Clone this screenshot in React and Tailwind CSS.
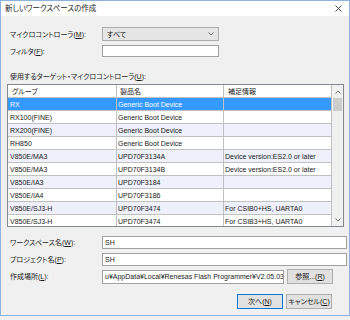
import React from "react";

const rows = [
  ["RX", "Generic Boot Device", ""],
  ["RX100(FINE)", "Generic Boot Device", ""],
  ["RX200(FINE)", "Generic Boot Device", ""],
  ["RH850", "Generic Boot Device", ""],
  ["V850E/MA3", "UPD70F3134A", "Device version:ES2.0 or later"],
  ["V850E/MA3", "UPD70F3134B", "Device version:ES2.0 or later"],
  ["V850E/IA3", "UPD70F3184", ""],
  ["V850E/IA4", "UPD70F3186", ""],
  ["V850E/SJ3-H", "UPD70F3474", "For CSIB0+HS, UARTA0"],
  ["V850E/SJ3-H", "UPD70F3474", "For CSIB3+HS, UARTA0"],
];

// label with underlined access key, e.g. マイクロコントローラ(M):
const Label = ({ text, hotkey, className = "" }) => (
  <span className={`whitespace-nowrap ${className}`}>
    {text}(<span className="underline">{hotkey}</span>):
  </span>
);

const Chevron = ({ up }) => (
  <svg width="6" height="4" viewBox="0 0 6 4">
    <path
      d={up ? "M0.5 3.5 L3 1 L5.5 3.5" : "M0.5 0.5 L3 3 L5.5 0.5"}
      fill="none"
      stroke="#707070"
      strokeWidth="1"
    />
  </svg>
);

const Btn = ({ children, primary }) => (
  <div
    className={`w-[46px] h-[15px] flex items-center justify-center bg-[#e1e1e1] border ${
      primary ? "border-[#0078d7]" : "border-[#adadad]"
    }`}
  >
    {children}
  </div>
);

export default function App() {
  return (
    <div className="w-[350px] h-[320px] bg-[#f0f0f0] font-['Liberation_Sans','Noto_Sans_CJK_JP',sans-serif] text-[7px] leading-none text-[#1a1a1a] [font-feature-settings:'palt']">
      <div className="w-[350px] h-[316px] border border-[#8db2e2] flex flex-col">
        {/* title bar */}
        <div className="h-[15px] bg-white flex items-center justify-between pl-[4px] pr-[7px]">
          <span className="text-[7.5px]">新しいワークスペースの作成</span>
          <svg width="7" height="7" viewBox="0 0 7 7">
            <path d="M0.5 0.5 L6.5 6.5 M6.5 0.5 L0.5 6.5" stroke="#333" strokeWidth="0.9" />
          </svg>
        </div>

        <div className="flex-1 flex flex-col">
          {/* microcontroller select */}
          <div className="mt-[11px] h-[14px] flex items-center pl-[9px]">
            <Label text="マイクロコントローラ" hotkey="M" className="w-[92px]" />
            <div className="w-[117px] h-[14px] bg-[#e5e5e5] border border-[#acacac] flex items-center justify-between pl-[4px] pr-[4px]">
              <span>すべて</span>
              <Chevron />
            </div>
          </div>

          {/* filter */}
          <div className="mt-[4px] h-[12px] flex items-center pl-[9px]">
            <Label text="フィルタ" hotkey="F" className="w-[92px]" />
            <div className="w-[117px] h-[12px] bg-white border border-[#a0a0a0]" />
          </div>

          <div className="mt-[14px] h-[10px] flex items-center pl-[9px]">
            <Label text="使用するターゲット・マイクロコントローラ" hotkey="U" />
          </div>

          {/* device grid */}
          <div className="mt-[3px] ml-[6px] w-[337px] h-[143px] border border-[#828790] bg-white flex overflow-hidden">
            <div className="w-[324px] flex flex-col">
              <div className="h-[13px] flex shrink-0 border-b border-[#c0c0c0]">
                <div className="w-[109px] border-r border-[#c0c0c0] flex items-center pl-[4px]">グループ</div>
                <div className="w-[107px] border-r border-[#c0c0c0] flex items-center pl-[3px]">製品名</div>
                <div className="w-[108px] border-r border-[#c0c0c0] flex items-center pl-[4px]">補足情報</div>
              </div>
              {rows.map((r, i) => {
                const selected = i === 0;
                const bg = selected ? "bg-[#3399ff] text-white" : i % 2 === 0 ? "bg-[#eef0fb]" : "bg-white";
                return (
                  <div key={i} className={`h-[13px] flex shrink-0 border-b border-[#c0c0c0] ${bg}`}>
                    <div className="w-[109px] border-r border-[#c0c0c0] flex items-center pl-[2px] whitespace-nowrap">{r[0]}</div>
                    <div className="w-[107px] border-r border-[#c0c0c0] flex items-center pl-[1px] whitespace-nowrap">{r[1]}</div>
                    <div className="w-[108px] border-r border-[#c0c0c0] flex items-center pl-[1px] whitespace-nowrap">{r[2]}</div>
                  </div>
                );
              })}
            </div>
            {/* scrollbar */}
            <div className="w-[11px] bg-[#f0f0f0] flex flex-col">
              <div className="h-[13px] flex items-center justify-center">
                <Chevron up />
              </div>
              <div className="h-[13px] mx-[1px] bg-[#cdcdcd]" />
              <div className="flex-1" />
              <div className="h-[12px] flex items-center justify-center">
                <Chevron />
              </div>
            </div>
          </div>

          {/* workspace name */}
          <div className="mt-[9px] h-[13px] flex items-center pl-[9px]">
            <Label text="ワークスペース名" hotkey="W" className="w-[92px]" />
            <div className="w-[245px] h-[13px] bg-white border border-[#a0a0a0] flex items-center pl-[2px]">SH</div>
          </div>

          {/* project name */}
          <div className="mt-[4px] h-[13px] flex items-center pl-[9px]">
            <Label text="プロジェクト名" hotkey="P" className="w-[92px]" />
            <div className="w-[245px] h-[13px] bg-white border border-[#a0a0a0] flex items-center pl-[2px]">SH</div>
          </div>

          {/* location */}
          <div className="mt-[3px] h-[15px] flex items-center pl-[9px]">
            <Label text="作成場所" hotkey="L" className="w-[92px]" />
            <div className="w-[182px] h-[14px] bg-white border border-[#a0a0a0] flex items-center pl-[2px] overflow-hidden whitespace-nowrap">
              u¥AppData¥Local¥Renesas Flash Programmer¥V2.05.03
            </div>
            <div className="ml-[3px]">
              <Btn>
                参照...(<span className="underline">R</span>)
              </Btn>
            </div>
          </div>

          {/* buttons */}
          <div className="mt-[10px] flex gap-[3px] pl-[236px]">
            <Btn primary>
              次へ(<span className="underline">N</span>)
            </Btn>
            <Btn>
              キャンセル(<span className="underline">C</span>)
            </Btn>
          </div>
        </div>
      </div>
    </div>
  );
}
